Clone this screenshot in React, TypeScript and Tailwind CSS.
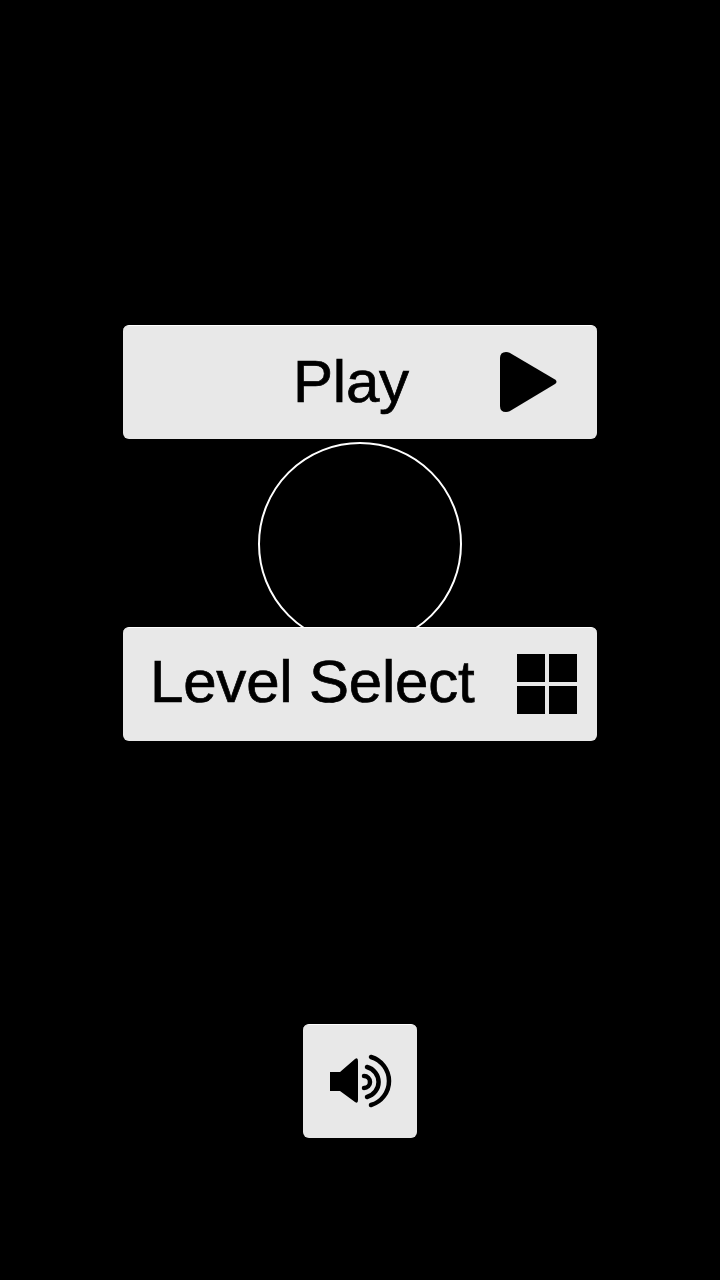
export default function App() {
  return (
    <div className="flex h-[1280px] w-[720px] flex-col items-center overflow-hidden bg-black pt-[325px] font-['Liberation_Sans',Arial,sans-serif] text-[60px] text-black">
      <button className="flex h-[114px] w-[474px] items-center rounded-[6px] border-t border-white bg-[#e8e8e8] pl-[170px]">
        <span className="-mt-[2px] w-[207px] text-left leading-none tracking-[-0.2px] [-webkit-text-stroke:0.7px_black]">Play</span>
        <svg width="57" height="61" viewBox="0 0 57 61" className="-mt-[3px]">
          <path d="M0 7 Q0 1 6 1 Q8 1 10 2 L55 28.5 Q58 30.5 55 33 L10 60 Q8 61 6 61 Q0 61 0 55 Z" fill="#000" />
        </svg>
      </button>

      <div className="mt-[3px] -mb-[19px] h-[204px] w-[204px] shrink-0 rounded-full border-2 border-white" />

      <button className="relative flex h-[114px] w-[474px] items-center rounded-[6px] border-t border-white bg-[#e8e8e8] pl-[27px]">
        <span className="-mt-[5px] w-[367px] text-left leading-none tracking-[-0.2px] [-webkit-text-stroke:0.7px_black]">Level Select</span>
        <div className="-mt-px grid grid-cols-2 gap-[4px]">
          <div className="h-[28px] w-[28px] bg-black" />
          <div className="h-[28px] w-[28px] bg-black" />
          <div className="h-[28px] w-[28px] bg-black" />
          <div className="h-[28px] w-[28px] bg-black" />
        </div>
      </button>

      <button className="mt-[283px] flex h-[114px] w-[114px] items-center justify-center rounded-[6px] border-t border-white bg-[#e8e8e8]">
        <svg width="60" height="60" viewBox="0 0 60 60" fill="none" className="-mt-px overflow-visible">
          <path d="M0 21 L10 21 L25 8 Q28 6 28 10 L28 49 Q28 53 25 51 L10 40 L0 40 Z" fill="#000" />
          <path d="M34 25 A6 6 0 0 1 34 37" stroke="#000" strokeWidth="4.5" strokeLinecap="round" />
          <path d="M37 16 A15.5 15.5 0 0 1 37 46" stroke="#000" strokeWidth="4.5" strokeLinecap="round" />
          <path d="M41 6 A25 25 0 0 1 41 54" stroke="#000" strokeWidth="4.5" strokeLinecap="round" />
        </svg>
      </button>
    </div>
  )
}
